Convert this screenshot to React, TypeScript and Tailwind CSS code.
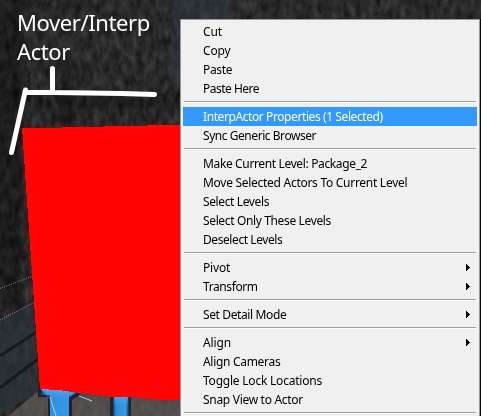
type Item = { label: string; tracking?: string; submenu?: boolean; active?: boolean };

const groups: Item[][] = [
  [
    { label: 'Cut' },
    { label: 'Copy' },
    { label: 'Paste', tracking: 'tracking-[-0.35px]' },
    { label: 'Paste Here', tracking: 'tracking-[-0.5px]' },
  ],
  [
    { label: 'InterpActor Properties (1 Selected)', active: true, tracking: 'tracking-[-0.41px]' },
    { label: 'Sync Generic Browser', tracking: 'tracking-[-0.45px]' },
  ],
  [
    { label: 'Make Current Level: Package_2', tracking: 'tracking-[-0.36px]' },
    { label: 'Move Selected Actors To Current Level', tracking: 'tracking-[-0.28px]' },
    { label: 'Select Levels', tracking: 'tracking-[-0.38px]' },
    { label: 'Select Only These Levels', tracking: 'tracking-[-0.36px]' },
    { label: 'Deselect Levels', tracking: 'tracking-[-0.42px]' },
  ],
  [
    { label: 'Pivot', submenu: true },
    { label: 'Transform', submenu: true, tracking: 'tracking-[-0.4px]' },
  ],
  [{ label: 'Set Detail Mode', submenu: true, tracking: 'tracking-[-0.38px]' }],
  [
    { label: 'Align', submenu: true },
    { label: 'Align Cameras', tracking: 'tracking-[-0.3px]' },
    { label: 'Toggle Lock Locations', tracking: 'tracking-[-0.22px]' },
    { label: 'Snap View to Actor', tracking: 'tracking-[-0.3px]' },
  ],
];

function Row({ item }: { item: Item }) {
  return (
    <li
      className={`flex h-[19px] items-center justify-between pl-5 pr-[7px] ${
        item.active ? 'bg-[#3399ff] text-white' : 'text-black'
      }`}
    >
      <span className={`whitespace-nowrap ${item.tracking ?? 'tracking-[-0.15px]'}`}>{item.label}</span>
      {item.submenu && (
        <svg width="4" height="7" viewBox="0 0 4 7" shapeRendering="crispEdges">
          <path d="M0 0h1v1h1v1h1v1h1v1h-1v1h-1v1h-1v1h-1z" />
        </svg>
      )}
    </li>
  );
}

function ContextMenu() {
  return (
    <nav className="ml-[180px] mt-[19px] h-[397px] w-[300px] overflow-hidden border border-b-0 border-[#979797] bg-[#f0f0f0] px-[2px] pt-[2px] text-[12px] leading-[19px] font-['Noto_Sans','Open_Sans',sans-serif]">
      {groups.map((group, i) => (
        <div key={i}>
          <ul>
            {group.map((item) => (
              <Row key={item.label} item={item} />
            ))}
          </ul>
          <div className="h-[9px] px-px pt-[3px]">
            <div className="h-[2px] border-t border-[#a0a0a0] bg-white" />
          </div>
        </div>
      ))}
    </nav>
  );
}

function Scene() {
  return (
    <svg className="absolute inset-0" width="481" height="416" viewBox="0 0 481 416">
      <defs>
        <filter id="grain" x="0" y="0" width="100%" height="100%" colorInterpolationFilters="sRGB">
          <feTurbulence type="fractalNoise" baseFrequency="0.16 0.08" numOctaves="4" seed="8" />
          <feColorMatrix values="0.2 0.13 0 0 0  0.2 0.13 0 0 0  0.2 0.13 0 0 0.005  0 0 0 0 1" />
        </filter>
        <filter id="soft"><feGaussianBlur stdDeviation="3" /></filter>
        <filter id="glow"><feGaussianBlur stdDeviation="4" /></filter>
        <linearGradient id="pipe">
          <stop offset="0" stopColor="#163b60" />
          <stop offset=".2" stopColor="#318fdd" />
          <stop offset=".8" stopColor="#339be8" />
          <stop offset="1" stopColor="#123049" />
        </linearGradient>
        <linearGradient id="lip" x2="0" y2="1">
          <stop offset="0" stopColor="#6c9cea" />
          <stop offset="1" stopColor="#2e98e4" stopOpacity="0" />
        </linearGradient>
      </defs>
      <rect width="481" height="416" fill="#292929" />
      <rect width="481" height="416" filter="url(#grain)" opacity=".9" />
      <g filter="url(#soft)">
        <rect x="-5" y="-5" width="18" height="310" fill="#080808" opacity=".3" />
        <rect x="14" y="-5" width="7" height="330" fill="#050505" opacity=".45" />
        <rect x="172" y="-5" width="60" height="90" fill="#33414a" opacity=".4" />
        <rect x="62" y="60" width="10" height="70" fill="#000" opacity=".3" />
        <rect x="20" y="96" width="160" height="14" fill="#000" opacity=".25" />
      </g>
      <path d="M0 320L34 302L40 389L0 416Z" fill="#2a363e" opacity=".65" />
      <path d="M0 356L38 331M0 388L38 359" stroke="#080c0f" strokeWidth="3" opacity=".6" />
      <path d="M8 416L40 390L180 400V416Z" fill="#67625f" opacity=".65" />
      <path d="M24 130L180 127V398L42 387Z" fill="#a00000" opacity=".6" filter="url(#glow)" />
      <path d="M0 288.5L33 276M0 320L35 302" fill="none" stroke="#a38ba2" strokeWidth="1" strokeDasharray="1 1.3" />
      <path d="M38 386H80V395L72 400V416H48V397H38Z" fill="#251e31" />
      <path d="M41 389H78V393L69 396V416H50V395H41Z" fill="url(#pipe)" />
      <rect x="110" y="394" width="21" height="22" fill="#20242c" />
      <rect x="113" y="395" width="16" height="21" fill="url(#pipe)" />
      <path d="M41 389H77L69 400H50Z" fill="url(#lip)" />
      <rect x="114" y="395" width="14" height="12" fill="url(#lip)" />
      <path d="M50 397L56 416M79 396L92 401" fill="none" stroke="#a9ceff" strokeWidth="1" />
      <path d="M22 128H62V127H104V126H147V125H180V400H160L138 398V397H113L80 393L58 390L40 389Z" fill="#ff0505" shapeRendering="crispEdges" />
      <g fill="none" stroke="#fff" strokeWidth="5" strokeLinecap="round" strokeLinejoin="round">
        <path d="M52.5 68.500V92M11.500 152.500L25.500 90M25.500 92.500L55 92.500L122 93.500L154.500 94.500" />
      </g>
      <rect x="480" y="19" width="1" height="397" fill="#070707" />
    </svg>
  );
}

export default function App() {
  return (
    <main className="relative h-[416px] w-[481px] overflow-hidden bg-[#252525]">
      <Scene />
      <div className="absolute left-[17px] top-[8px] text-[22px] leading-[29px] tracking-[-0.4px] text-white font-['Noto_Sans','Open_Sans',sans-serif]">
        Mover/Interp
        <br />
        Actor
      </div>
      <div className="relative flex">
        <ContextMenu />
      </div>
    </main>
  );
}
